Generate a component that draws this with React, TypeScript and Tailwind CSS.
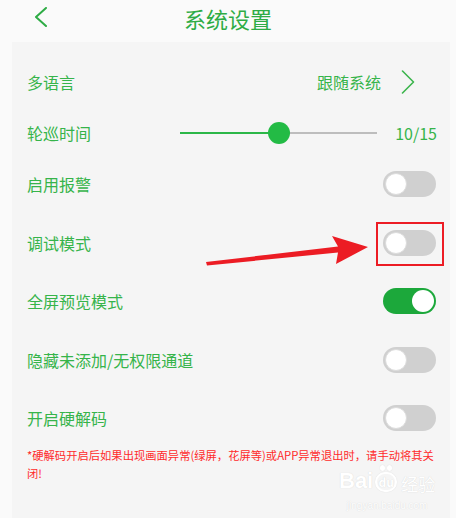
import React from "react";

const GREEN = "text-[#36b44a]";

function Toggle({ on }: { on?: boolean }) {
  if (on) {
    return (
      <div className="w-[53px] h-[26px] rounded-full bg-[#1ca83b] relative flex items-center justify-end pr-[2px]">
        <div className="w-[22px] h-[22px] rounded-full bg-white" />
      </div>
    );
  }
  return (
    <div className="w-[53px] h-[26px] rounded-full bg-[#d0d0d0] flex items-center pl-[2px]">
      <div className="w-[22px] h-[22px] rounded-full bg-white border border-[#dcdcdc]" />
    </div>
  );
}

function Row({ label, mt, on }: { label: string; mt: string; on?: boolean }) {
  return (
    <div className={`h-[40px] flex items-center justify-between pl-[15px] pr-[14px] ${mt}`}>
      <span className={`text-[16px] ${GREEN}`}>{label}</span>
      <Toggle on={on} />
    </div>
  );
}

export default function App() {
  return (
    <div className="w-[456px] h-[518px] bg-[#fafafa] relative overflow-hidden font-['Noto_Sans_CJK_SC','Noto_Sans',sans-serif]">
      <div className="h-[42px] flex items-center relative">
        <svg className="absolute left-[33px] top-[7px]" width="15" height="20" viewBox="0 0 15 20">
          <path d="M13 1 L3 10 L13 19" fill="none" stroke="#2eac45" strokeWidth="2" strokeLinecap="round" strokeLinejoin="round" />
        </svg>
        <div className="w-full text-center text-[22px] leading-[30px] text-[#2eac45] -mt-[6px]">系统设置</div>
      </div>
      <div className="ml-[12px] mr-[6px] h-[476px] bg-[#f5f5f5] pt-[20px] flex flex-col">
        <div className="h-[40px] flex items-center pl-[15px] pr-[35px]">
          <span className={`text-[16px] ${GREEN}`}>多语言</span>
          <span className={`ml-auto text-[16px] ${GREEN}`}>跟随系统</span>
          <svg className="ml-[20px]" width="14" height="24" viewBox="0 0 14 24">
            <path d="M1.5 1 L12.5 12 L1.5 23" fill="none" stroke="#3cb54d" strokeWidth="1.6" strokeLinecap="round" strokeLinejoin="round" />
          </svg>
        </div>
        <div className="h-[40px] flex items-center pl-[15px] pr-[13px] mt-[11px]">
          <span className={`w-[153px] text-[16px] ${GREEN}`}>轮巡时间</span>
          <div className="w-[197px] h-[24px] relative flex items-center">
            <div className="h-[2px] w-[99px] bg-[#2cb748]" />
            <div className="h-[2px] flex-1 bg-[#bdbdbd]" />
            <div className="absolute left-[88px] top-[1px] w-[22px] h-[22px] rounded-full bg-[#23bb45]" />
          </div>
          <span className={`ml-auto text-[16px] ${GREEN}`}>10/15</span>
        </div>
        <Row label="启用报警" mt="mt-[11px]" />
        <Row label="调试模式" mt="mt-[19px]" />
        <Row label="全屏预览模式" mt="mt-[18px]" on />
        <Row label="隐藏未添加/无权限通道" mt="mt-[19px]" />
        <Row label="开启硬解码" mt="mt-[18px]" />
        <div className="mt-[8px] pl-[15px] pr-[8px] text-[11.3px] leading-[18px] text-[#ff2b2b]">
          <span className="whitespace-nowrap">*硬解码开启后如果出现画面异常(绿屏，花屏等)或APP异常退出时，请手动将其关</span>
          <br />
          闭!
        </div>
      </div>

      {/* red highlight box */}
      <div className="absolute left-[376px] top-[222px] w-[68px] h-[44px] border-2 border-[#ec1c24]" />

      {/* arrow */}
      <svg className="absolute left-0 top-0" width="456" height="518" viewBox="0 0 456 518">
        <polygon points="206,262 338,246.5 332,236 368,247 336,264 338,252.5 207,265.5" fill="#ec1c24" />
      </svg>

      {/* watermark */}
      <div className="absolute left-[339px] top-[470px] flex flex-col items-center text-white [text-shadow:0_0_1px_#cfcfcf]">
        <div className="flex items-end leading-none">
          <span className="text-[22px] font-bold font-['Liberation_Sans',sans-serif]">Bai</span>
          <span className="relative mx-[2px] w-[22px] h-[20px] rounded-full border-2 border-white text-[12px] font-bold flex items-center justify-center [box-shadow:0_0_1px_#cfcfcf]">
            du
            <span className="absolute -top-[9px] left-[3px] flex gap-[2px]">
              <span className="w-[5px] h-[6px] rounded-full bg-white [box-shadow:0_0_1px_#cfcfcf]" />
              <span className="w-[5px] h-[6px] rounded-full bg-white [box-shadow:0_0_1px_#cfcfcf]" />
            </span>
          </span>
          <span className="text-[17px] ml-[2px]">经验</span>
        </div>
        <span className="text-[10px] mt-[6px] font-['Liberation_Sans',sans-serif]">jingyan.baidu.com</span>
      </div>
    </div>
  );
}
